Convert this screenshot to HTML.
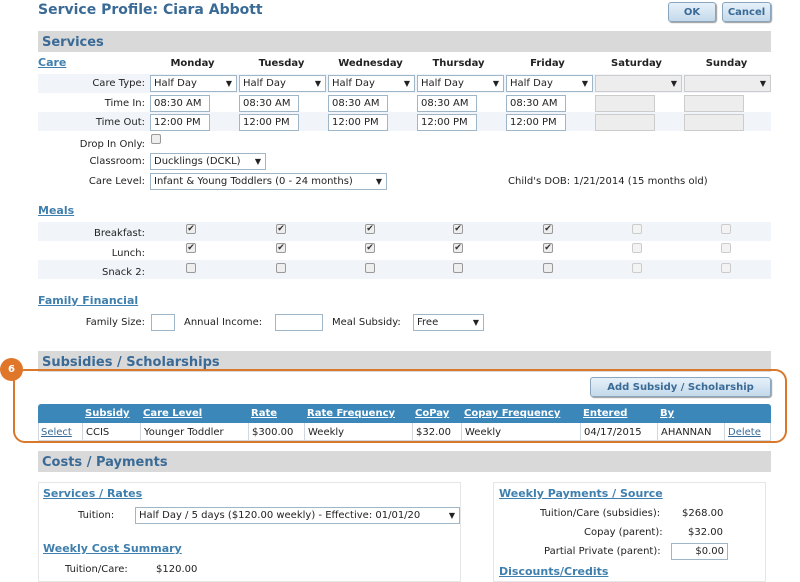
<!DOCTYPE html>
<html><head><meta charset="utf-8"><style>
*{box-sizing:border-box;margin:0;padding:0}
body{width:800px;height:574px;overflow:hidden;background:#fff;font-family:"DejaVu Sans","Liberation Sans",sans-serif;font-size:10px;color:#222;position:relative}
.a{position:absolute;white-space:nowrap;margin-top:1px}
.t{position:absolute;font-weight:bold;color:#3a6a96}
.bar{position:absolute;left:38px;width:733px;height:21px;background:#d9d9d9;color:#3a6a96;font-weight:bold;font-size:13px;padding:4px 4px 0;line-height:15px}
.lnk{position:absolute;color:#3f7fae;font-weight:bold;text-decoration:underline;font-size:11px;margin-top:1px}
.band{position:absolute;left:38px;width:733px;height:19px;background:#f1f5fa}
.lbl{position:absolute;text-align:right;width:110px;left:35px;margin-top:1px}
.sel{position:absolute;height:17px;border:1px solid #9fb5c8;background:#fff;padding:1px 3px;line-height:14px}
.sel::after{content:"▼";position:absolute;right:4px;top:1px;font-size:8px}
.sel.dis{background:#ededed;border-color:#ccc}
.inp{position:absolute;height:17px;border:1px solid #9fb5c8;background:#fff;padding:1px 3px;line-height:14px;width:60px}
.inp.dis{background:#ededed;border-color:#ccc}
.day{position:absolute;width:89px;text-align:center;font-weight:bold;top:58px}
.cb{position:absolute;width:10px;height:10px;border:1px solid #999;border-radius:2px;background:#eee;font-size:9px;line-height:8px;text-align:center;color:#333}
.cb.dis{border-color:#ccc;background:#f3f3f3}
.btn{position:absolute;height:20px;border:1px solid #8aa6bf;border-radius:3px;background:linear-gradient(#e6f1fa,#c4d9ea);color:#3a6a96;font-weight:bold;text-align:center;line-height:19px;box-shadow:1px 1px 1px #999}
.th{position:absolute;top:404px;height:19px;line-height:20px;color:#fff;font-weight:bold;text-decoration:underline;padding-left:3px}
.td{position:absolute;top:423px;height:18px;line-height:19px;padding-left:3px;border-left:1px solid #cfd8e0}
</style></head><body>
<div class="t" style="left:38px;top:2px;font-size:14px">Service Profile: Ciara Abbott</div>
<div class="btn" style="left:668px;top:2px;width:48px">OK</div>
<div class="btn" style="left:722px;top:2px;width:49px">Cancel</div>

<div class="bar" style="top:31px">Services</div>
<div class="lnk" style="left:38px;top:55px">Care</div>
<div class="day" style="left:148px">Monday</div>
<div class="day" style="left:237px">Tuesday</div>
<div class="day" style="left:326px">Wednesday</div>
<div class="day" style="left:414px">Thursday</div>
<div class="day" style="left:503px">Friday</div>
<div class="day" style="left:592px">Saturday</div>
<div class="day" style="left:682px">Sunday</div>

<div class="band" style="top:74px"></div>
<div class="band" style="top:112px"></div>
<div class="lbl" style="top:77px">Care Type:</div>
<div class="lbl" style="top:97px">Time In:</div>
<div class="lbl" style="top:116px">Time Out:</div>

<div class="sel" style="left:150px;top:75px;width:87px">Half Day</div>
<div class="sel" style="left:239px;top:75px;width:87px">Half Day</div>
<div class="sel" style="left:328px;top:75px;width:87px">Half Day</div>
<div class="sel" style="left:417px;top:75px;width:87px">Half Day</div>
<div class="sel" style="left:506px;top:75px;width:87px">Half Day</div>
<div class="sel dis" style="left:595px;top:75px;width:87px"></div>
<div class="sel dis" style="left:684px;top:75px;width:87px"></div>

<div class="inp" style="left:150px;top:95px">08:30 AM</div>
<div class="inp" style="left:239px;top:95px">08:30 AM</div>
<div class="inp" style="left:328px;top:95px">08:30 AM</div>
<div class="inp" style="left:417px;top:95px">08:30 AM</div>
<div class="inp" style="left:506px;top:95px">08:30 AM</div>
<div class="inp dis" style="left:595px;top:95px"></div>
<div class="inp dis" style="left:684px;top:95px"></div>
<div class="inp" style="left:150px;top:114px">12:00 PM</div>
<div class="inp" style="left:239px;top:114px">12:00 PM</div>
<div class="inp" style="left:328px;top:114px">12:00 PM</div>
<div class="inp" style="left:417px;top:114px">12:00 PM</div>
<div class="inp" style="left:506px;top:114px">12:00 PM</div>
<div class="inp dis" style="left:595px;top:114px"></div>
<div class="inp dis" style="left:684px;top:114px"></div>

<div class="lbl" style="top:138px">Drop In Only:</div>
<div class="cb" style="left:151px;top:134px"></div>
<div class="lbl" style="top:155px">Classroom:</div>
<div class="sel" style="left:150px;top:153px;width:116px">Ducklings (DCKL)</div>
<div class="lbl" style="top:175px">Care Level:</div>
<div class="sel" style="left:150px;top:173px;width:237px">Infant &amp; Young Toddlers (0 - 24 months)</div>
<div class="a" style="left:508px;top:175px">Child's DOB: 1/21/2014 (15 months old)</div>

<div class="lnk" style="left:38px;top:203px">Meals</div>
<div class="band" style="top:222px"></div>
<div class="band" style="top:260px"></div>
<div class="lbl" style="top:227px">Breakfast:</div>
<div class="lbl" style="top:247px">Lunch:</div>
<div class="lbl" style="top:266px">Snack 2:</div>
<div class="cb" style="left:186px;top:224px">✔</div><div class="cb" style="left:276px;top:224px">✔</div><div class="cb" style="left:365px;top:224px">✔</div><div class="cb" style="left:453px;top:224px">✔</div><div class="cb" style="left:543px;top:224px">✔</div><div class="cb dis" style="left:632px;top:224px"></div><div class="cb dis" style="left:721px;top:224px"></div>
<div class="cb" style="left:186px;top:243px">✔</div><div class="cb" style="left:276px;top:243px">✔</div><div class="cb" style="left:365px;top:243px">✔</div><div class="cb" style="left:453px;top:243px">✔</div><div class="cb" style="left:543px;top:243px">✔</div><div class="cb dis" style="left:632px;top:243px"></div><div class="cb dis" style="left:721px;top:243px"></div>
<div class="cb" style="left:186px;top:263px"></div><div class="cb" style="left:276px;top:263px"></div><div class="cb" style="left:365px;top:263px"></div><div class="cb" style="left:453px;top:263px"></div><div class="cb" style="left:543px;top:263px"></div><div class="cb dis" style="left:632px;top:263px"></div><div class="cb dis" style="left:721px;top:263px"></div>

<div class="lnk" style="left:38px;top:293px">Family Financial</div>
<div class="lbl" style="top:316px">Family Size:</div>
<div class="inp" style="left:151px;top:314px;width:24px"></div>
<div class="a" style="left:184px;top:316px">Annual Income:</div>
<div class="inp" style="left:275px;top:314px;width:48px"></div>
<div class="a" style="left:332px;top:316px">Meal Subsidy:</div>
<div class="sel" style="left:413px;top:314px;width:71px">Free</div>

<div class="bar" style="top:351px">Subsidies / Scholarships</div>
<div style="position:absolute;left:13px;top:369px;width:774px;height:74px;border:2px solid #d9782b;border-radius:12px"></div>
<div style="position:absolute;left:0;top:358px;width:23px;height:23px;border-radius:50%;background:#e0762a;color:#fff;font-weight:bold;font-size:10px;text-align:center;line-height:23px">6</div>
<div class="btn" style="left:590px;top:377px;width:181px">Add Subsidy / Scholarship</div>
<div style="position:absolute;left:38px;top:404px;width:733px;height:19px;background:#3c87b9;border-radius:3px 3px 0 0"></div>
<div style="position:absolute;left:38px;top:423px;width:733px;height:18px;background:#fff;border:1px solid #cfd8e0;border-top:none"></div>
<div class="th" style="left:82px">Subsidy</div>
<div class="th" style="left:140px">Care Level</div>
<div class="th" style="left:248px">Rate</div>
<div class="th" style="left:304px">Rate Frequency</div>
<div class="th" style="left:412px">CoPay</div>
<div class="th" style="left:461px">Copay Frequency</div>
<div class="th" style="left:580px">Entered</div>
<div class="th" style="left:657px">By</div>
<div class="td" style="left:38px;border:none;color:#3a6a96;text-decoration:underline">Select</div>
<div class="td" style="left:82px">CCIS</div>
<div class="td" style="left:140px">Younger Toddler</div>
<div class="td" style="left:248px">$300.00</div>
<div class="td" style="left:304px">Weekly</div>
<div class="td" style="left:412px">$32.00</div>
<div class="td" style="left:461px">Weekly</div>
<div class="td" style="left:580px">04/17/2015</div>
<div class="td" style="left:657px">AHANNAN</div>
<div class="td" style="left:724px;color:#3a6a96;text-decoration:underline">Delete</div>

<div class="bar" style="top:451px">Costs / Payments</div>
<div style="position:absolute;left:38px;top:482px;width:423px;height:100px;border:1px solid #e6e6e6"></div>
<div class="lnk" style="left:43px;top:486px">Services / Rates</div>
<div class="a" style="left:78px;top:509px">Tuition:</div>
<div class="sel" style="left:135px;top:507px;width:325px">Half Day / 5 days ($120.00 weekly) - Effective: 01/01/20</div>
<div class="lnk" style="left:43px;top:541px">Weekly Cost Summary</div>
<div class="a" style="left:65px;top:563px">Tuition/Care:</div>
<div class="a" style="left:156px;top:563px">$120.00</div>

<div style="position:absolute;left:493px;top:482px;width:273px;height:100px;border:1px solid #e6e6e6"></div>
<div class="lnk" style="left:499px;top:486px">Weekly Payments / Source</div>
<div class="a" style="left:540px;top:507px">Tuition/Care (subsidies):</div>
<div class="a" style="left:682px;top:507px">$268.00</div>
<div class="a" style="left:584px;top:526px">Copay (parent):</div>
<div class="a" style="left:688px;top:526px">$32.00</div>
<div class="a" style="left:544px;top:545px">Partial Private (parent):</div>
<div class="inp" style="left:671px;top:543px;width:57px;text-align:right">$0.00</div>
<div class="lnk" style="left:499px;top:564px">Discounts/Credits</div>
</body></html>
